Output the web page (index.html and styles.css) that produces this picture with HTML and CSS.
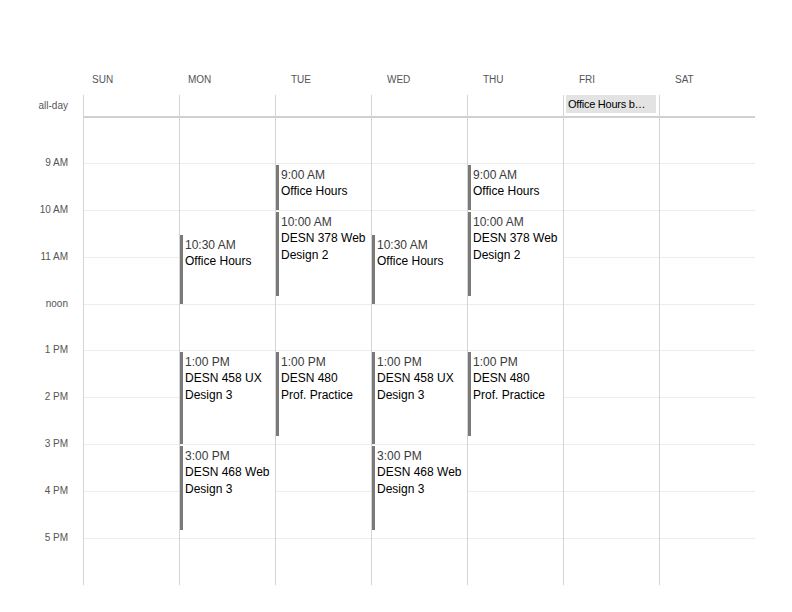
FILE: index.html
```html
<!DOCTYPE html>
<html>
<head>
<meta charset="utf-8">
<title>Week</title>
<link rel="stylesheet" href="styles.css">
</head>
<body>
<div class="cal">
  <div class="row head">
    <div></div>
    <div class="dname">SUN</div>
    <div class="dname">MON</div>
    <div class="dname">TUE</div>
    <div class="dname">WED</div>
    <div class="dname">THU</div>
    <div class="dname">FRI</div>
    <div class="dname">SAT</div>
  </div>
  <div class="row allday">
    <div class="gut">all-day</div>
    <div class="adcell"></div>
    <div class="adcell"></div>
    <div class="adcell"></div>
    <div class="adcell"></div>
    <div class="adcell"></div>
    <div class="adcell"><div class="adevent">Office Hours b…</div></div>
    <div class="adcell"></div>
  </div>
  <div class="body">
    <div class="times">
      <div class="slot"></div>
      <div class="slot"><span>9 AM</span></div>
      <div class="slot"><span>10 AM</span></div>
      <div class="slot"><span>11 AM</span></div>
      <div class="slot"><span>noon</span></div>
      <div class="slot"><span>1 PM</span></div>
      <div class="slot"><span>2 PM</span></div>
      <div class="slot"><span>3 PM</span></div>
      <div class="slot"><span>4 PM</span></div>
      <div class="slot"><span>5 PM</span></div>
    </div>
    <div class="lines">
      <div></div><div></div><div></div><div></div><div></div>
      <div></div><div></div><div></div><div></div><div></div>
    </div>
    <div class="day"></div>
    <div class="day">
      <div class="ev" style="grid-row: 16 / 25"><span class="t">10:30 AM</span><span class="n">Office Hours</span></div>
      <div class="ev" style="grid-row: 31 / 43"><span class="t">1:00 PM</span><span class="n">DESN 458 UX Design 3</span></div>
      <div class="ev" style="grid-row: 43 / 54"><span class="t">3:00 PM</span><span class="n">DESN 468 Web Design 3</span></div>
    </div>
    <div class="day">
      <div class="ev" style="grid-row: 7 / 13"><span class="t">9:00 AM</span><span class="n">Office Hours</span></div>
      <div class="ev" style="grid-row: 13 / 24"><span class="t">10:00 AM</span><span class="n">DESN 378 Web Design 2</span></div>
      <div class="ev" style="grid-row: 31 / 42"><span class="t">1:00 PM</span><span class="n">DESN 480 Prof. Practice</span></div>
    </div>
    <div class="day">
      <div class="ev" style="grid-row: 16 / 25"><span class="t">10:30 AM</span><span class="n">Office Hours</span></div>
      <div class="ev" style="grid-row: 31 / 43"><span class="t">1:00 PM</span><span class="n">DESN 458 UX Design 3</span></div>
      <div class="ev" style="grid-row: 43 / 54"><span class="t">3:00 PM</span><span class="n">DESN 468 Web Design 3</span></div>
    </div>
    <div class="day">
      <div class="ev" style="grid-row: 7 / 13"><span class="t">9:00 AM</span><span class="n">Office Hours</span></div>
      <div class="ev" style="grid-row: 13 / 24"><span class="t">10:00 AM</span><span class="n">DESN 378 Web Design 2</span></div>
      <div class="ev" style="grid-row: 31 / 42"><span class="t">1:00 PM</span><span class="n">DESN 480 Prof. Practice</span></div>
    </div>
    <div class="day"></div>
    <div class="day"></div>
  </div>
</div>
</body>
</html>
```

FILE: styles.css
```css
html, body {
  margin: 0;
  padding: 0;
  background: #fff;
}

body {
  font-family: "Liberation Sans", Helvetica, Arial, sans-serif;
  color: #000;
}

.cal {
  padding-top: 73px;
}

.row {
  display: grid;
  grid-template-columns: 83px repeat(7, 96px);
}

.head {
  height: 22px;
}

.dname {
  padding-left: 16px;
  font-size: 10px;
  line-height: 14px;
  color: #555;
}

.dname:nth-child(2),
.dname:nth-child(3) {
  padding-left: 9px;
}

.allday {
  height: 23px;
}

.gut {
  font-size: 10px;
  line-height: 19px;
  padding-top: 1px;
  color: #555;
  text-align: right;
  padding-right: 15px;
}

.adcell {
  box-sizing: border-box;
  height: 23px;
  border-left: 1px solid #d4d4d4;
  border-bottom: 2px solid #d0d0d0;
}

.adevent {
  box-sizing: border-box;
  margin-left: 2px;
  width: 90px;
  height: 18px;
  padding-left: 2px;
  background: #e3e3e3;
  font-size: 11px;
  line-height: 18px;
  letter-spacing: -0.25px;
  white-space: nowrap;
  overflow: hidden;
  color: #000;
}

.body {
  display: grid;
  grid-template-columns: 83px repeat(7, 96px);
  grid-template-rows: 468.75px;
  margin-top: -2px;
}

.times {
  grid-column: 1;
  grid-row: 1;
}

.slot {
  display: flow-root;
  height: 46.875px;
}

.slot span {
  display: block;
  margin-top: -6px;
  padding-right: 15px;
  text-align: right;
  font-size: 10px;
  line-height: 12px;
  color: #555;
}

.lines {
  grid-column: 2 / 9;
  grid-row: 1;
}

.lines div {
  box-sizing: border-box;
  height: 46.875px;
  border-top: 1px solid #ececec;
}

.lines div:first-child {
  border-top: none;
}

.day {
  grid-row: 1;
  box-sizing: border-box;
  border-left: 1px solid #d4d4d4;
  display: grid;
  grid-template-rows: repeat(60, 7.8125px);
  grid-template-columns: 95px;
}

.day:nth-child(3) { grid-column: 2; }
.day:nth-child(4) { grid-column: 3; }
.day:nth-child(5) { grid-column: 4; }
.day:nth-child(6) { grid-column: 5; }
.day:nth-child(7) { grid-column: 6; }
.day:nth-child(8) { grid-column: 7; }
.day:nth-child(9) { grid-column: 8; }

.ev {
  grid-column: 1;
  min-height: 0;
  margin-top: 2px;
  border-left: 3px solid #7a7a7a;
  background: #fff;
  padding: 3px 5px 0 2px;
  overflow: hidden;
}

.ev .t {
  display: block;
  font-size: 12px;
  line-height: 15px;
  color: #3a3a3a;
}

.ev .n {
  display: block;
  font-size: 12px;
  line-height: 17px;
  color: #000;
}
```
